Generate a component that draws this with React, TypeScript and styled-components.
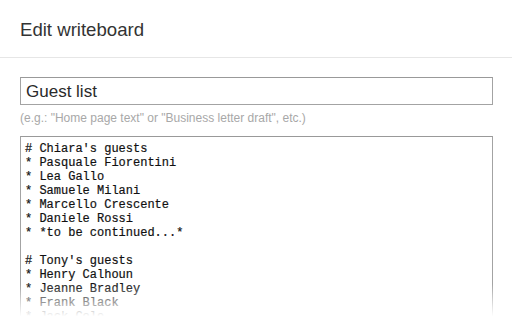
import React from "react";
import styled, { createGlobalStyle } from "styled-components";

const GlobalStyle = createGlobalStyle`
  html, body {
    margin: 0;
    padding: 0;
    background: #fff;
  }
  body {
    font-family: "Liberation Sans", Arial, sans-serif;
  }
`;

const Page = styled.div`
  position: relative;
  width: 512px;
  height: 320px;
  overflow: hidden;
  background: #fff;
`;

const Header = styled.div`
  height: 58px;
  box-sizing: border-box;
  padding: 19px 20px 0;
  border-bottom: 1px solid #e6e6e6;
  font-size: 18.6px;
  color: #333;
`;

const Form = styled.div`
  display: flex;
  flex-direction: column;
  padding: 19px 19px 0 20px;
`;

const TitleInput = styled.div`
  height: 28px;
  box-sizing: border-box;
  border: 1px solid #a3a3a3;
  border-top-color: #999;
  padding: 4px 5px 0;
  font-size: 17px;
  color: #2a2a2a;
`;

const Hint = styled.div`
  margin-top: 6px;
  font-size: 12px;
  color: #a8a8a8;
`;

const Editor = styled.pre`
  margin: 11px 0 0;
  height: 220px;
  box-sizing: border-box;
  border: 1px solid #a3a3a3;
  border-top-color: #999;
  padding: 5px 4px 0;
  font-family: "Liberation Mono", "Courier New", monospace;
  font-size: 12px;
  line-height: 14px;
  color: #111;
  -webkit-text-stroke: 0.2px #111;
`;

const Fade = styled.div`
  position: absolute;
  left: 0;
  right: 0;
  bottom: 0;
  height: 36px;
  background: linear-gradient(rgba(255, 255, 255, 0), #fff 90%);
`;

const lines = [
  "# Chiara's guests",
  "* Pasquale Fiorentini",
  "* Lea Gallo",
  "* Samuele Milani",
  "* Marcello Crescente",
  "* Daniele Rossi",
  "* *to be continued...*",
  "",
  "# Tony's guests",
  "* Henry Calhoun",
  "* Jeanne Bradley",
  "* Frank Black",
  "* Jack Cole",
];

const App = () => {
  return (
    <Page>
      <GlobalStyle />
      <Header>Edit writeboard</Header>
      <Form>
        <TitleInput>Guest list</TitleInput>
        <Hint>(e.g.: "Home page text" or "Business letter draft", etc.)</Hint>
        <Editor>{lines.join("\n")}</Editor>
      </Form>
      <Fade />
    </Page>
  );
};

export default App;
